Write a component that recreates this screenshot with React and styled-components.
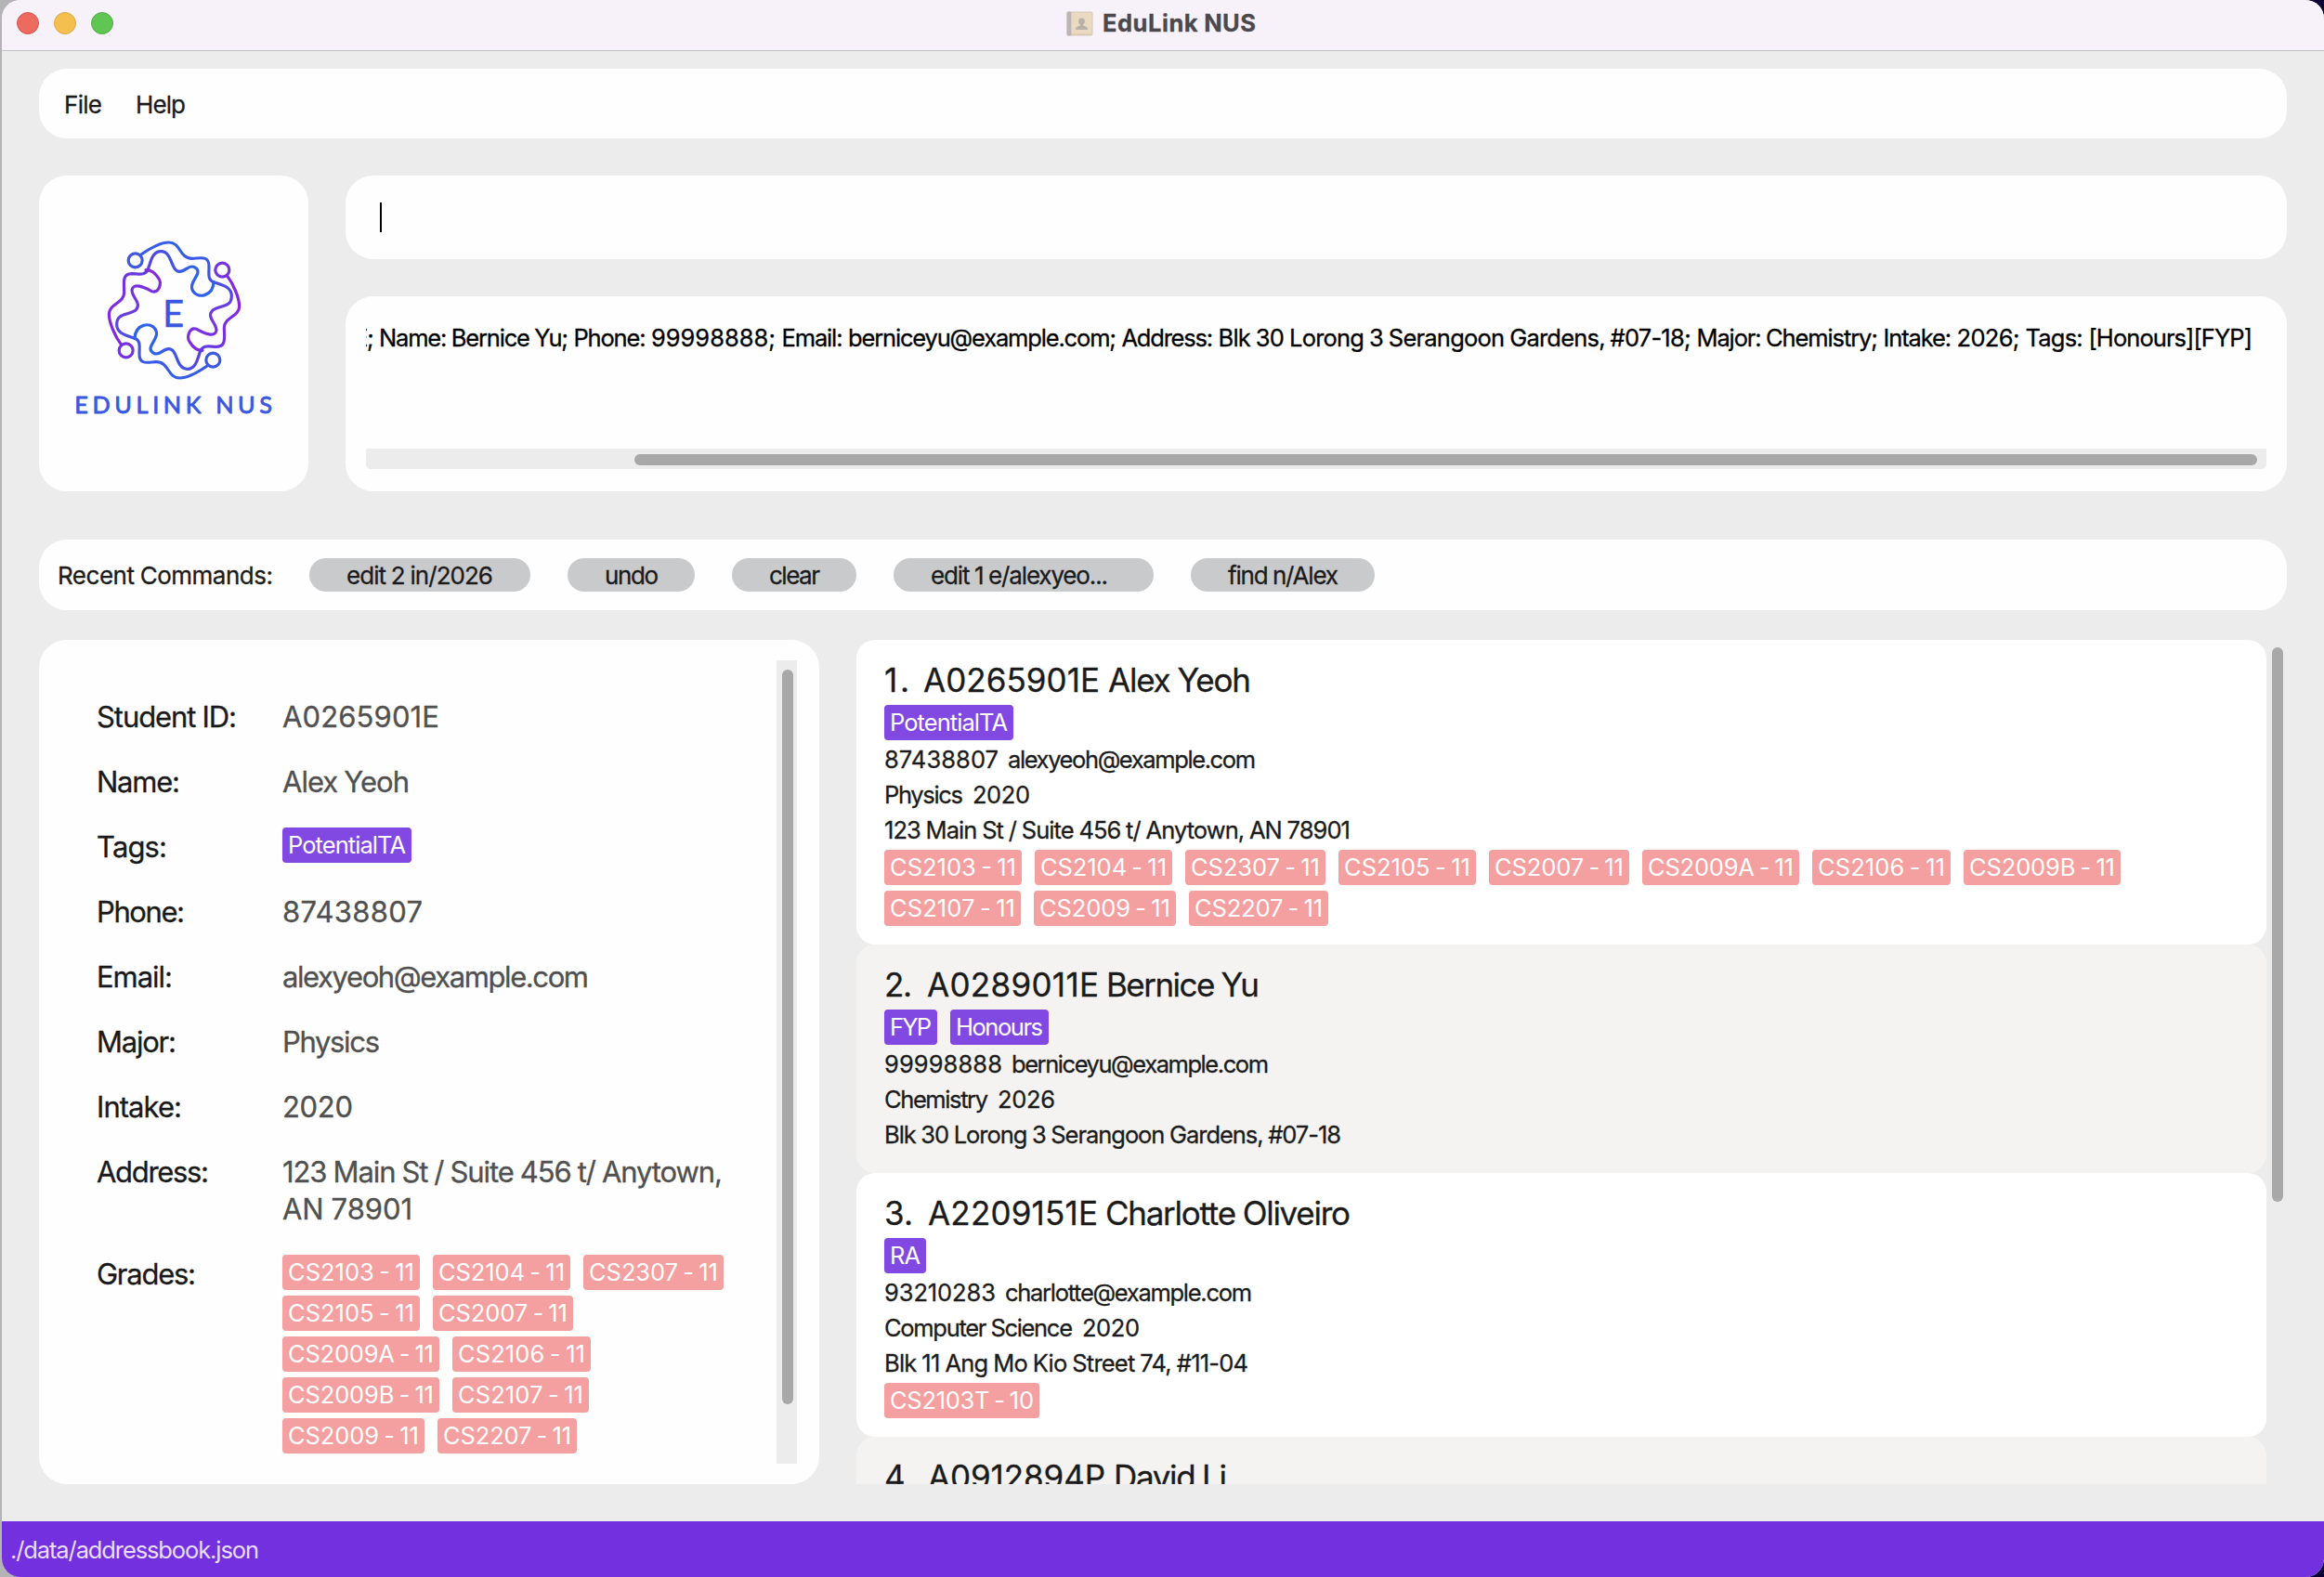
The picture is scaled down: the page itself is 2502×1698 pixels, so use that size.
import React, { useLayoutEffect, useRef, useState } from "react";
import styled, { createGlobalStyle } from "styled-components";

const GlobalStyle = createGlobalStyle`
  * { box-sizing: border-box; }
  body {
    margin: 0;
    background: linear-gradient(90deg, #b4b4b6 0 50%, #0d0035 50% 100%);
    font-family: Inter, "Liberation Sans", sans-serif;
    color: #1b1b1b;
    overflow: hidden;
  }
`;

const Run = styled.span`
  display: block;
  flex: none;
  width: ${(p) => p.$width}px;
  white-space: pre;
  word-spacing: -0.02em;
  -webkit-text-stroke: 0.3px currentColor;
`;

/* Tracks its text so that the run takes exactly the given advance width. */
function Tracked({ width, children }) {
  const ref = useRef(null);
  const [spacing, setSpacing] = useState(0);
  useLayoutEffect(() => {
    const range = document.createRange();
    range.selectNodeContents(ref.current);
    const natural = range.getBoundingClientRect().width;
    setSpacing((width - natural) / Math.max(1, children.length - 1));
  }, [width, children]);
  return (
    <Run ref={ref} $width={width} style={{ letterSpacing: `${spacing}px` }}>
      {children}
    </Run>
  );
}

const Window = styled.div`
  width: 2500px;
  height: 1698px;
  margin-left: 2px;
  display: flex;
  flex-direction: column;
  background: #ececec;
  border-radius: 20px;
  overflow: hidden;
`;

const TitleBar = styled.header`
  height: 55px;
  flex: none;
  display: flex;
  align-items: center;
  padding: 0 16px 4px;
  background: #f7f2f9;
  border-bottom: 1px solid #c4c1c5;
`;

const Lights = styled.div`
  display: flex;
  gap: 16px;
  width: 1130px;
`;

const Light = styled.i`
  width: 24px;
  height: 24px;
  border-radius: 50%;
  background: ${(p) => p.$fill};
  border: 1px solid ${(p) => p.$edge};
`;

const WindowTitle = styled.div`
  display: flex;
  align-items: center;
  gap: 10px;
  font-size: 25.5px;
  font-weight: 700;
  line-height: 36px;
  color: #4b494d;
`;

const Content = styled.main`
  height: 1583px;
  flex: none;
  display: flex;
  flex-direction: column;
  padding: 19px 40px 40px;
`;

const Panel = styled.section`
  background: #fefefe;
  border-radius: 30px;
`;

const MenuBar = styled(Panel)`
  height: 75px;
  flex: none;
  display: flex;
  align-items: center;
  gap: 36px;
  padding: 2px 27px 0;
  font-size: 26px;
  line-height: 38px;
`;

const TopArea = styled.div`
  display: flex;
  gap: 40px;
  height: 340px;
  margin-top: 40px;
  flex: none;
`;

const LogoCard = styled(Panel)`
  width: 290px;
  flex: none;
  padding: 41px 0 0 18px;
`;

const Console = styled.div`
  flex: 1;
  min-width: 0;
  display: flex;
  flex-direction: column;
  gap: 40px;
`;

const CommandBox = styled(Panel)`
  height: 90px;
  display: flex;
  align-items: center;
  padding: 0 37px;
`;

const Caret = styled.i`
  width: 2px;
  height: 32px;
  background: #000;
`;

const ResultBox = styled(Panel)`
  height: 210px;
  display: flex;
  flex-direction: column;
  justify-content: space-between;
  padding: 26px 22px 24px;
`;

const ResultLine = styled.div`
  display: flex;
  justify-content: flex-end;
  overflow: hidden;
  padding-right: 15px;
  font-size: 25.5px;
  line-height: 38px;
  color: #000;
`;

const HorizontalTrack = styled.div`
  height: 22px;
  display: flex;
  justify-content: flex-end;
  padding: 6px 10px 4px 0;
  background: #ececec;
  border-radius: 0 0 5px 5px;
`;

const Thumb = styled.i`
  display: block;
  width: ${(p) => p.$w}px;
  height: ${(p) => p.$h}px;
  border-radius: 6px;
  background: #a8a8a8;
`;

const RecentBar = styled(Panel)`
  height: 76px;
  flex: none;
  display: flex;
  align-items: center;
  gap: 40px;
  margin-top: 52px;
  padding: 0 20px;
  font-size: 26px;
  line-height: 38px;
`;

const RecentLabel = styled.div`
  width: 231px;
  padding-top: 2px;
`;

const RecentChip = styled.div`
  width: ${(p) => p.$w}px;
  height: 36px;
  padding: 1px 0 0 40px;
  line-height: 36px;
  background: #c9cacc;
  border-radius: 18px;
`;

const LowerArea = styled.div`
  display: flex;
  gap: 40px;
  height: 909px;
  margin-top: 32px;
  flex: none;
`;

const DetailPanel = styled(Panel)`
  width: 840px;
  flex: none;
  display: flex;
  justify-content: space-between;
  padding: 22px 24px 22px 62px;
`;

const DetailList = styled.div`
  display: flex;
  flex-direction: column;
  gap: 29px;
  padding-top: 40px;
`;

const DetailRow = styled.div`
  display: flex;
  align-items: flex-start;
`;

const DetailLabel = styled.div`
  width: 200px;
  padding-top: 1px;
  font-size: 31px;
  line-height: 40px;
  color: #191919;
`;

const DetailValue = styled.div`
  padding-top: 1px;
  font-size: 31px;
  line-height: 40px;
  color: #505050;
`;

const VerticalTrack = styled.div`
  width: 22px;
  padding: 10px 0 0 6px;
  background: #ececec;
`;

const ChipFlow = styled.div`
  display: flex;
  flex-wrap: wrap;
  gap: 6px 14px;
  width: ${(p) => (p.$w ? `${p.$w}px` : "auto")};
`;

const Chip = styled.span`
  display: block;
  width: ${(p) => p.$w}px;
  height: 38px;
  padding-left: 6px;
  border-radius: 4px;
  font-size: 25.5px;
  line-height: 38px;
  color: #fff;
  background: ${(p) => (p.$kind === "tag" ? "#8149e2" : "#f49fa0")};

  ${Run} {
    word-spacing: -0.07em;
    -webkit-text-stroke: 0;
  }
`;

const StudentList = styled.div`
  width: 1518px;
  flex: none;
  overflow: hidden;
`;

const StudentCard = styled.article`
  display: flex;
  flex-direction: column;
  padding: 20px 30px;
  border-radius: 20px;
  background: ${(p) => (p.$alt ? "#f4f3f1" : "#ffffff")};
`;

const StudentTitle = styled.div`
  display: flex;
  height: 50px;
  font-size: 35px;
  line-height: 46px;
`;

const TitleGap = styled.i`
  width: ${(p) => p.$w}px;
`;

const StudentLines = styled.div`
  padding-top: 4px;
`;

const StudentLine = styled.div`
  display: flex;
  gap: 10px;
  height: 38px;
  font-size: 25.5px;
  line-height: 34px;
`;

const ListScroll = styled.div`
  margin-left: -34px;
  padding-top: 8px;
`;

const StatusBar = styled.footer`
  flex: 1;
  padding: 9px 0 0 9px;
  font-size: 25.5px;
  line-height: 44px;
  color: #e9defa;
  background: #7230df;

  ${Run} {
    -webkit-text-stroke: 0;
  }
`;

function BookIcon() {
  return (
    <svg width="29" height="27" viewBox="0 0 29 27">
      <rect x="0.5" y="0.5" width="28" height="26" rx="2" fill="#d9c9b4" />
      <rect x="0.5" y="0.5" width="5" height="26" rx="1.5" fill="#bcb4b6" />
      <rect x="5.5" y="1.5" width="22" height="23" rx="1" fill="#eadac2" />
      <circle cx="16.5" cy="11" r="3.4" fill="#b9b0aa" />
      <path d="M15 12h3v3.500c2.500 1 5 1.200 5 4.500h-13c0-3.300 2.500-3.500 5-4.500z" fill="#b9b0aa" />
    </svg>
  );
}

const LogoWord = styled.text`
  font-family: Lato, Inter, sans-serif;
  font-size: ${(p) => p.$size}px;
  font-weight: 400;
  fill: #3957e0;
  stroke: #3957e0;
  stroke-width: ${(p) => p.$bold}px;
  stroke-linejoin: round;
`;

function LogoHalf() {
  return (
    <>
      <path
        stroke="url(#fall)"
        d="M276 132C305 112 340 93 365 93C405 93 398 145 440 145C465 145 495 133 495 170C495 195 490 214 510 221C535 230 568 235 568 266C568 305 530 295 507 312C485 335 519 352 519 377C515 402 480 387 455 373C430 366 422 400 433 415C442 430 455 442 474 442"
      />
      <path
        stroke="url(#across)"
        d="M212 424C190 395 172 350 172 325C172 290 221 290 221 255C221 225 213 195 245 194C268 194 288 202 298 180C307 155 312 122 340 122C378 122 370 187 400 187C420 187 430 163 448 173C482 190 425 220 443 250C458 276 508 268 510 221"
      />
      <circle cx="257" cy="151" r="22.500" stroke="#3c58e0" />
      <circle cx="227" cy="442" r="22.500" stroke="#7432e0" />
    </>
  );
}

function Logo() {
  return (
    <svg width="260" height="240" viewBox="0 0 780 720">
      <defs>
        <linearGradient id="fall" gradientUnits="userSpaceOnUse" x1="480" y1="93" x2="440" y2="430">
          <stop offset="0" stopColor="#2f61e6" />
          <stop offset="0.35" stopColor="#4650e2" />
          <stop offset="0.6" stopColor="#6a3be0" />
          <stop offset="1" stopColor="#8428e0" />
        </linearGradient>
        <linearGradient id="across" gradientUnits="userSpaceOnUse" x1="172" y1="300" x2="455" y2="200">
          <stop offset="0" stopColor="#8428e0" />
          <stop offset="0.55" stopColor="#5a41e0" />
          <stop offset="1" stopColor="#2c63e8" />
        </linearGradient>
      </defs>
      <g fill="none" strokeWidth="9.500" strokeLinecap="round" strokeLinejoin="round">
        <LogoHalf />
        <g transform="rotate(180 382.500 312)">
          <LogoHalf />
        </g>
      </g>
      <LogoWord x="345" y="365" $size={119} $bold={1} textLength="70" lengthAdjust="spacingAndGlyphs">
        E
      </LogoWord>
      <LogoWord x="61" y="643.5" $size={76} $bold={2.5} textLength="638" lengthAdjust="spacing">
        EDULINK NUS
      </LogoWord>
    </svg>
  );
}

const resultRuns = [
  ["E; ", 27],
  ["Name: Bernice Yu; ", 209.5],
  ["Phone: ", 83.5],
  ["99998888; ", 140.5],
  ["Email: ", 71.5],
  ["berniceyu@example.com; ", 294.5],
  ["Address: ", 104],
  ["Blk 30 Lorong 3 Serangoon Gardens, #07-18; ", 515],
  ["Major: Chemistry; ", 201],
  ["Intake: ", 79],
  ["2026; ", 74],
  ["Tags: ", 68],
  ["[Honours][FYP]", 176.5],
];

const recent = [
  { text: "edit 2 in/2026", chip: 238, width: 158 },
  { text: "undo", chip: 137, width: 58 },
  { text: "clear", chip: 134, width: 55 },
  { text: "edit 1 e/alexyeo...", chip: 280, width: 191 },
  { text: "find n/Alex", chip: 198, width: 119 },
];

const grades = [
  ["CS2103 - 11", 148],
  ["CS2104 - 11", 148],
  ["CS2307 - 11", 151],
  ["CS2105 - 11", 148],
  ["CS2007 - 11", 151],
  ["CS2009A - 11", 169],
  ["CS2106 - 11", 149],
  ["CS2009B - 11", 169],
  ["CS2107 - 11", 147],
  ["CS2009 - 11", 153],
  ["CS2207 - 11", 150],
];

const details = [
  { label: ["Student ID:", 151], lines: [["A0265901E", 169]] },
  { label: ["Name:", 90], lines: [["Alex Yeoh", 137]] },
  { label: ["Tags:", 76], tags: [["PotentialTA", 139]] },
  { label: ["Phone:", 95], lines: [["87438807", 151]] },
  { label: ["Email:", 82], lines: [["alexyeoh@example.com", 330]] },
  { label: ["Major:", 86], lines: [["Physics", 105]] },
  { label: ["Intake:", 92], lines: [["2020", 76]] },
  {
    label: ["Address:", 121],
    lines: [
      ["123 Main St / Suite 456 t/ Anytown,", 474],
      ["AN 78901", 140],
    ],
  },
  { label: ["Grades:", 107], grades },
];

const students = [
  {
    title: [["1.", 27], 15, ["A0265901E", 190], 9, ["Alex Yeoh", 154]],
    tags: [["PotentialTA", 139]],
    lines: [
      [["87438807", 123], ["alexyeoh@example.com", 267]],
      [["Physics", 85], ["2020", 62]],
      [["123 Main St / Suite 456 t/ Anytown, AN 78901", 502]],
    ],
    grades,
  },
  {
    title: [["2.", 30], 16, ["A0289011E", 185], 8, ["Bernice Yu", 165]],
    tags: [["FYP", 57], ["Honours", 106]],
    lines: [
      [["99998888", 127], ["berniceyu@example.com", 277]],
      [["Chemistry", 112], ["2026", 62]],
      [["Blk 30 Lorong 3 Serangoon Gardens, #07-18", 492]],
    ],
  },
  {
    title: [["3.", 31], 16, ["A2209151E", 183], 8, ["Charlotte Oliveiro", 264]],
    tags: [["RA", 45]],
    lines: [
      [["93210283", 120], ["charlotte@example.com", 266]],
      [["Computer Science", 203], ["2020", 62]],
      [["Blk 11 Ang Mo Kio Street 74, #11-04", 392]],
    ],
    grades: [["CS2103T - 10", 167]],
  },
  {
    title: [["4.", 30], 17, ["A0912894P", 191], 9, ["David Li", 122]],
    tags: [],
    lines: [],
  },
];

function Chips({ items, kind, width }) {
  return (
    <ChipFlow $w={width}>
      {items.map(([text, w]) => (
        <Chip key={text} $w={w} $kind={kind}>
          <Tracked width={w - 12}>{text}</Tracked>
        </Chip>
      ))}
    </ChipFlow>
  );
}

function Detail({ label, lines, tags, grades: marks }) {
  return (
    <DetailRow>
      <DetailLabel>
        <Tracked width={label[1]}>{label[0]}</Tracked>
      </DetailLabel>
      {lines && (
        <DetailValue>
          {lines.map(([text, w]) => (
            <Tracked key={text} width={w}>{text}</Tracked>
          ))}
        </DetailValue>
      )}
      {tags && <Chips items={tags} kind="tag" width={480} />}
      {marks && <Chips items={marks} kind="grade" width={480} />}
    </DetailRow>
  );
}

function Student({ student, alt }) {
  return (
    <StudentCard $alt={alt}>
      <StudentTitle>
        {student.title.map((part, i) =>
          typeof part === "number" ? (
            <TitleGap key={i} $w={part} />
          ) : (
            <Tracked key={i} width={part[1]}>{part[0]}</Tracked>
          )
        )}
      </StudentTitle>
      <Chips items={student.tags} kind="tag" />
      <StudentLines>
        {student.lines.map((parts, i) => (
          <StudentLine key={i}>
            {parts.map(([text, w]) => (
              <Tracked key={text} width={w}>{text}</Tracked>
            ))}
          </StudentLine>
        ))}
      </StudentLines>
      {student.grades && <Chips items={student.grades} kind="grade" />}
    </StudentCard>
  );
}

export default function App() {
  return (
    <>
      <GlobalStyle />
      <Window>
        <TitleBar>
          <Lights>
            <Light $fill="#ed6a5e" $edge="#d8564b" />
            <Light $fill="#f5bf4f" $edge="#dba73c" />
            <Light $fill="#61c554" $edge="#4fae43" />
          </Lights>
          <WindowTitle>
            <BookIcon />
            <Tracked width={165}>EduLink NUS</Tracked>
          </WindowTitle>
        </TitleBar>
        <Content>
          <MenuBar>
            <Tracked width={41}>File</Tracked>
            <Tracked width={54}>Help</Tracked>
          </MenuBar>
          <TopArea>
            <LogoCard>
              <Logo />
            </LogoCard>
            <Console>
              <CommandBox>
                <Caret />
              </CommandBox>
              <ResultBox>
                <ResultLine>
                  {resultRuns.map(([text, w]) => (
                    <Tracked key={text} width={w}>{text}</Tracked>
                  ))}
                </ResultLine>
                <HorizontalTrack>
                  <Thumb $w={1747} $h={12} />
                </HorizontalTrack>
              </ResultBox>
            </Console>
          </TopArea>
          <RecentBar>
            <RecentLabel>
              <Tracked width={232}>Recent Commands:</Tracked>
            </RecentLabel>
            {recent.map((r) => (
              <RecentChip key={r.text} $w={r.chip}>
                <Tracked width={r.width}>{r.text}</Tracked>
              </RecentChip>
            ))}
          </RecentBar>
          <LowerArea>
            <DetailPanel>
              <DetailList>
                {details.map((d) => (
                  <Detail key={d.label[0]} {...d} />
                ))}
              </DetailList>
              <VerticalTrack>
                <Thumb $w={12} $h={791} />
              </VerticalTrack>
            </DetailPanel>
            <StudentList>
              {students.map((s, i) => (
                <Student key={i} student={s} alt={i % 2 === 1} />
              ))}
            </StudentList>
            <ListScroll>
              <Thumb $w={12} $h={597} />
            </ListScroll>
          </LowerArea>
        </Content>
        <StatusBar>
          <Tracked width={268}>./data/addressbook.json</Tracked>
        </StatusBar>
      </Window>
    </>
  );
}
